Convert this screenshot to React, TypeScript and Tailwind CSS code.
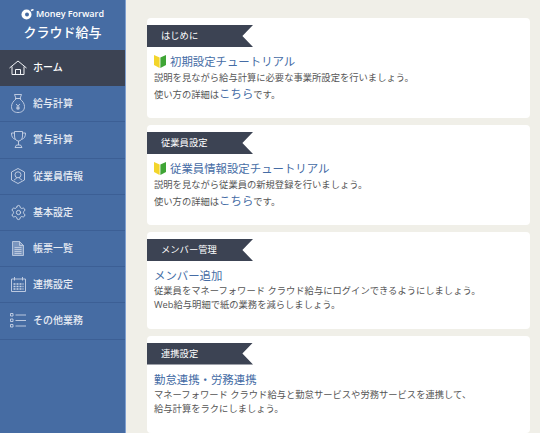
import type { ReactNode } from 'react';
import { Settings } from 'lucide-react';

const font = '[font-family:"Open_Sans","Noto_Sans_CJK_JP",sans-serif]';

function HomeIcon() {
  return (
    <svg width="18" height="15" viewBox="0 0 18 15" fill="none" stroke="#f2f4f7" strokeWidth="1">
      <path d="M.5 8 9 1l8.500 7" />
      <path d="M3 6.500v8h12v-8" />
      <path d="M6.500 14.500v-5h5v5" />
    </svg>
  );
}

function MoneyIcon() {
  return (
    <svg width="14" height="19" viewBox="0 0 14 19" fill="none" stroke="#c9d4e6" strokeWidth="0.9">
      <path d="M3.500.5h7L9 4.500H5z" />
      <path d="M4 4.500h6" />
      <path d="M5 5C2.500 7 .5 9.500.5 12.500c0 4 2.500 6 6.500 6s6.500-2 6.500-6C13.500 9.500 11.500 7 9 5" />
      <path d="M5.200 10 7 12.300 8.800 10M7 12.300V16M5.200 13.200h3.600M5.200 14.700h3.600" />
    </svg>
  );
}

function TrophyIcon() {
  return (
    <svg width="15" height="17" viewBox="0 0 15 17" fill="none" stroke="#c9d4e6" strokeWidth="0.9">
      <path d="M3.500.5h8v4.500c0 3-1.800 5-4 5s-4-2-4-5z" />
      <path d="M3.500 2H.5c0 3.500 1 5.500 4 6.500M11.500 2h3c0 3.500-1 5.500-4 6.500" />
      <path d="M7.500 10v4M4 16.500l1.500-2.500h4l1.500 2.500z" />
    </svg>
  );
}

function PersonIcon() {
  return (
    <svg width="14" height="16" viewBox="0 0 14 16" fill="none" stroke="#c9d4e6" strokeWidth="0.9">
      <path d="M7 .5 13.500 4v8L7 15.500.5 12V4z" />
      <circle cx="7" cy="6.800" r="3" />
      <path d="M5.500 9.500c0 1.300-1.200 1.800-2.500 2.500M8.500 9.500c0 1.300 1.200 1.800 2.500 2.500" />
    </svg>
  );
}

function DocIcon() {
  return (
    <svg width="12" height="15" viewBox="0 0 12 15" fill="#c9d4e6" stroke="#c9d4e6" strokeWidth="0.8">
      <path d="M.5.500h7l4 4v10H.5z" fillOpacity="0.4" />
      <path d="M7.500.500v4h4" fill="none" />
      <path d="M2.500 6.500h7M2.500 8.500h7M2.500 10.500h7M2.500 12.500h7" fill="none" />
    </svg>
  );
}

function CalendarIcon() {
  return (
    <svg width="15" height="15" viewBox="0 0 15 15" fill="none" stroke="#c9d4e6" strokeWidth="0.9">
      <path d="M.5 2h14v12.500H.5z" />
      <path d="M3.500 0v3.500M11.500 0v3.500" />
      <path d="M2.500 7h10M2.500 9.500h10M2.500 12h10" strokeWidth="1.500" strokeDasharray="2 1" />
    </svg>
  );
}

function ListIcon() {
  return (
    <svg width="16" height="15" viewBox="0 0 16 15" fill="none" stroke="#c9d4e6" strokeWidth="0.9">
      <path d="M.5.500H3V3H.5zM.5 6H3v2.500H.5zM.5 11.500H3V14H.5z" />
      <path d="M5.500 2H16M5.500 7.500H16M5.500 13H16" />
    </svg>
  );
}

function BeginnerMark() {
  return (
    <svg width="12" height="13" viewBox="0 0 12 13" className="shrink-0">
      <path d="M0 0 5.600 2.500V13L0 10z" fill="#f3d52b" />
      <path d="M12 0 6.400 2.500V13l5.600-3z" fill="#3fa535" />
    </svg>
  );
}

const menu: { label: string; icon: ReactNode; active?: boolean }[] = [
  { label: 'ホーム', icon: <HomeIcon />, active: true },
  { label: '給与計算', icon: <MoneyIcon /> },
  { label: '賞与計算', icon: <TrophyIcon /> },
  { label: '従業員情報', icon: <PersonIcon /> },
  { label: '基本設定', icon: <Settings size={17} strokeWidth={1.4} color="#c9d4e6" /> },
  { label: '帳票一覧', icon: <DocIcon /> },
  { label: '連携設定', icon: <CalendarIcon /> },
  { label: 'その他業務', icon: <ListIcon /> },
];

function Ribbon({ title }: { title: string }) {
  return (
    <div className="h-[22px] w-[106px] bg-[#3c4353] pl-[14px] text-[9.3px] leading-[22px] text-white [clip-path:polygon(0_0,100%_0,90%_50%,100%_100%,0_100%)]">
      {title}
    </div>
  );
}

function Card({ ribbon, heading, mark, lines, height }: {
  ribbon: string;
  heading: string;
  mark?: boolean;
  lines: ReactNode[];
  height: string;
}) {
  return (
    <section className={`${height} rounded-sm bg-white pt-[7px]`}>
      <Ribbon title={ribbon} />
      <div className="px-[7px] pt-[6px]">
        <h2 className="flex h-[17px] items-center gap-[4px] text-[11.4px] font-normal leading-[17px] text-[#456ca5]">
          {mark && <BeginnerMark />}
          {heading}
        </h2>
        {lines.map((line, i) => (
          <p key={i} className={`text-[9.3px] text-[#555555] ${mark ? 'h-[15px] leading-[15px]' : 'h-[14px] leading-[14px]'}`}>{line}</p>
        ))}
      </div>
    </section>
  );
}

const detail = (
  <span className="relative top-[1px]">
    使い方の詳細は<a className="text-[11.4px] text-[#456ca5]">こちら</a>です。
  </span>
);

export default function App() {
  return (
    <div className={`flex h-[433px] w-[540px] overflow-hidden bg-[#f0efe8] ${font}`}>
      <aside className="h-full w-[126px] shrink-0 border-r border-[#7f9fcf] bg-[#466ca3]">
        <div className="flex h-[50px] flex-col items-center pt-[8px] text-white">
          <div className="flex h-[12px] items-center gap-[2px] text-[9px] font-semibold leading-[12px]">
            <svg width="13" height="11" viewBox="0 0 13 11">
              <circle cx="5.500" cy="5.500" r="5" fill="#ffffff" />
              <circle cx="6" cy="5.500" r="2" fill="#466ca3" />
              <path d="M10 1.500 12.500.5" stroke="#ffffff" strokeWidth="1.500" />
            </svg>
            Money Forward
          </div>
          <div className="mt-[3px] text-[13px] font-medium leading-[19px]">クラウド給与</div>
        </div>
        <nav>
          {menu.map((item) => (
            <div
              key={item.label}
              className={`flex h-[36.2px] items-center border-b ${
                item.active ? 'border-[#3c4353] bg-[#3c4353] text-white' : 'border-[#3c5f95] text-[#e6ebf3]'
              }`}
            >
              <span className="flex w-[33px] shrink-0 justify-center pl-[3px]">{item.icon}</span>
              <span className="text-[10px] font-medium">{item.label}</span>
            </div>
          ))}
        </nav>
      </aside>
      <main className="flex min-w-0 flex-1 flex-col gap-[7px] pl-[21px] pr-[10px] pt-[18px]">
        <Card
          ribbon="はじめに"
          heading="初期設定チュートリアル"
          mark
          height="h-[100px]"
          lines={['説明を見ながら給与計算に必要な事業所設定を行いましょう。', detail]}
        />
        <Card
          ribbon="従業員設定"
          heading="従業員情報設定チュートリアル"
          mark
          height="h-[100px]"
          lines={['説明を見ながら従業員の新規登録を行いましょう。', detail]}
        />
        <Card
          ribbon="メンバー管理"
          heading="メンバー追加"
          height="h-[96.5px]"
          lines={['従業員をマネーフォワード クラウド給与にログインできるようにしましょう。', 'Web給与明細で紙の業務を減らしましょう。']}
        />
        <Card
          ribbon="連携設定"
          heading="勤怠連携・労務連携"
          height="h-[97px]"
          lines={['マネーフォワード クラウド給与と勤怠サービスや労務サービスを連携して、', '給与計算をラクにしましょう。']}
        />
      </main>
    </div>
  );
}
